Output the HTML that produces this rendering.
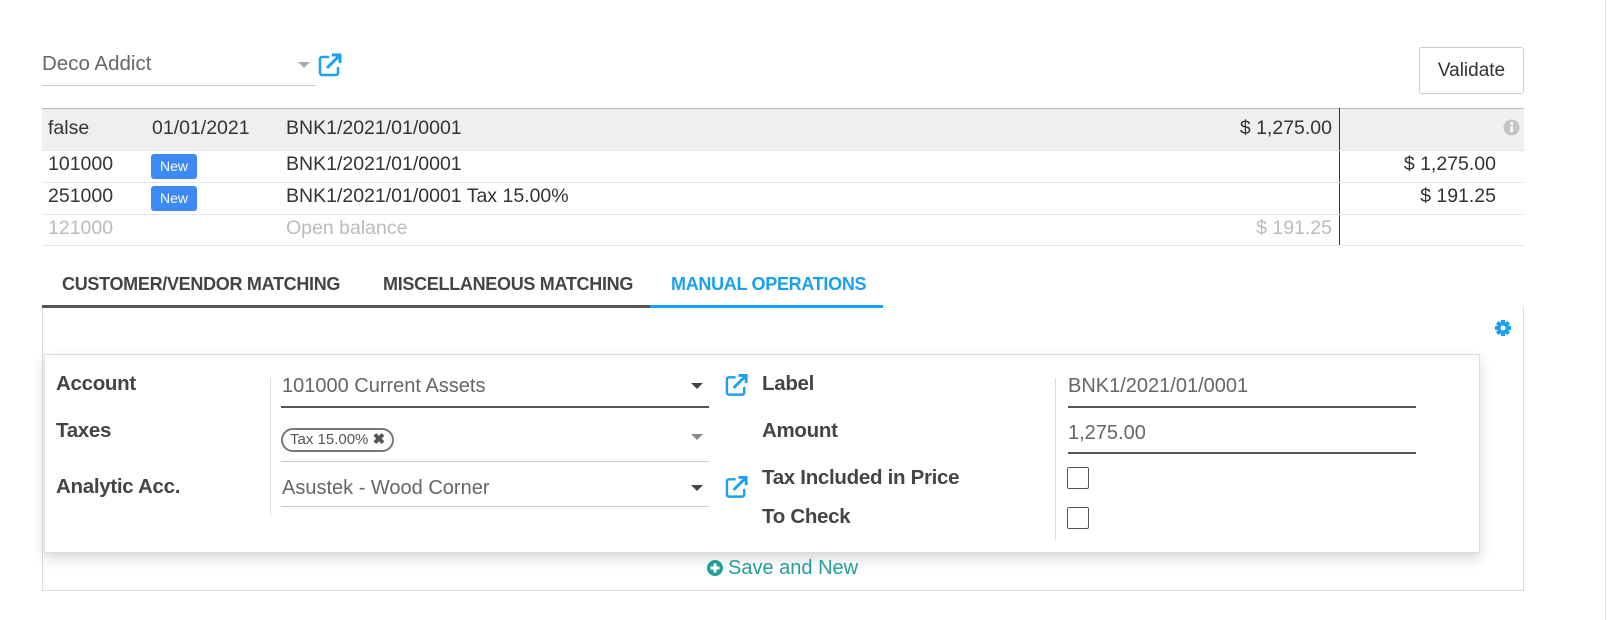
<!DOCTYPE html>
<html><head><meta charset="utf-8"><style>
*{margin:0;padding:0;box-sizing:border-box}
body{width:1609px;height:620px;background:#fff;font-family:"Liberation Sans",sans-serif;color:#4c4c4c;position:relative;overflow:hidden;font-size:17px}
.a{position:absolute;white-space:nowrap}
.t{font-size:19.5px;line-height:24px;color:#333}
.lbl{font-size:20.5px;line-height:24px;font-weight:bold;color:#444;letter-spacing:-0.3px}
.inp{font-size:20px;line-height:24px;color:#666}
.hl{position:absolute;height:1px;background:#e6e6e6}
.badge{position:absolute;background:#3d8af7;color:#fff;font-size:14px;border-radius:3px;width:46px;height:25px;line-height:25px;text-align:center}
.chk{position:absolute;width:22px;height:22px;border:1px solid #555;border-radius:2px;background:#fff}
.caret{position:absolute;width:0;height:0;border-left:6px solid transparent;border-right:6px solid transparent;border-top:6px solid #444}
.tab{font-size:18px;font-weight:bold;color:#444;letter-spacing:-0.3px;line-height:22px}
</style></head><body>
<div class="a" style="right:3px;top:0;width:1px;height:620px;background:#e0e0e0"></div>

<!-- partner -->
<div class="a" style="left:42px;top:52px;font-size:20.5px;line-height:24px;color:#666">Deco Addict</div>
<div class="caret" style="left:298px;top:62px;border-top-color:#aaa"></div>
<div class="a" style="left:42px;top:85px;width:274px;height:1px;background:#ccc"></div>
<svg class="a" style="left:318px;top:53px" width="26" height="24" viewBox="0 0 26 24"><path d="M11 4H4a2 2 0 0 0-2 2v14a2 2 0 0 0 2 2h14a2 2 0 0 0 2-2v-6" fill="none" stroke="#1aa0f0" stroke-width="2.5"/><path d="M9 15L22 2M14 2h8v8" fill="none" stroke="#1aa0f0" stroke-width="3"/></svg>

<div class="a" style="left:1419px;top:47px;width:105px;height:47px;border:1px solid #ccc;border-radius:3px;text-align:center;line-height:45px;font-size:19px;color:#333">Validate</div>

<!-- table -->
<div class="a" style="left:42px;top:108px;width:1482px;height:42px;background:#efefef;border-top:1px solid #bbb"></div>
<div class="a" style="left:1339px;top:108px;width:1px;height:137px;background:#333"></div>
<div class="hl" style="left:42px;top:150px;width:1482px"></div>
<div class="hl" style="left:42px;top:182px;width:1482px"></div>
<div class="hl" style="left:42px;top:214px;width:1482px"></div>
<div class="hl" style="left:42px;top:245px;width:1482px"></div>
<div class="a t" style="left:48px;top:116px">false</div>
<div class="a t" style="left:152px;top:116px">01/01/2021</div>
<div class="a t" style="left:286px;top:116px">BNK1/2021/01/0001</div>
<div class="a t" style="right:277px;top:116px">$ 1,275.00</div>
<svg class="a" style="left:1503px;top:119px" width="17" height="17" viewBox="0 0 17 17"><circle cx="8.5" cy="8.5" r="8" fill="#c4c4c4"/><rect x="7.3" y="7" width="2.6" height="6" fill="#fff"/><circle cx="8.6" cy="4.5" r="1.5" fill="#fff"/></svg>

<div class="a t" style="left:48px;top:152px">101000</div>
<div class="badge" style="left:151px;top:154px">New</div>
<div class="a t" style="left:286px;top:152px">BNK1/2021/01/0001</div>
<div class="a t" style="right:113px;top:152px">$ 1,275.00</div>

<div class="a t" style="left:48px;top:184px">251000</div>
<div class="badge" style="left:151px;top:186px">New</div>
<div class="a t" style="left:286px;top:184px">BNK1/2021/01/0001 Tax 15.00%</div>
<div class="a t" style="right:113px;top:184px">$ 191.25</div>

<div class="a t" style="left:48px;top:216px;color:#bbb">121000</div>
<div class="a t" style="left:286px;top:216px;color:#bbb">Open balance</div>
<div class="a t" style="right:277px;top:216px;color:#bbb">$ 191.25</div>

<!-- tabs -->
<div class="a tab" style="left:62px;top:273px">CUSTOMER/VENDOR MATCHING</div>
<div class="a tab" style="left:383px;top:273px">MISCELLANEOUS MATCHING</div>
<div class="a tab" style="left:671px;top:273px;color:#1aa0f0">MANUAL OPERATIONS</div>
<div class="a" style="left:42px;top:307px;width:1482px;height:284px;border:1px solid #ddd;border-top:none"></div>
<div class="a" style="left:42px;top:305px;width:608px;height:3px;background:#555"></div>
<div class="a" style="left:650px;top:305px;width:233px;height:3px;background:#1aa0f0"></div>
<svg class="a" style="left:1494px;top:319px" width="18" height="18" viewBox="0 0 18 18"><g fill="#1aa0f0"><circle cx="9" cy="9" r="6"/><rect x="7" y="1" width="4" height="16"/><rect x="1" y="7" width="16" height="4"/><rect x="7" y="1" width="4" height="16" transform="rotate(45 9 9)"/><rect x="7" y="1" width="4" height="16" transform="rotate(-45 9 9)"/></g><circle cx="9" cy="9" r="2.5" fill="#fff"/></svg>

<!-- inner card -->
<div class="a" style="left:44px;top:354px;width:1436px;height:199px;background:#fff;border:1px solid #ddd;box-shadow:0 6px 12px rgba(0,0,0,0.15)"></div>
<div class="a" style="left:270px;top:378px;width:1px;height:137px;background:#ddd"></div>
<div class="a" style="left:1055px;top:378px;width:1px;height:162px;background:#ddd"></div>

<div class="a lbl" style="left:56px;top:372px">Account</div>
<div class="a lbl" style="left:56px;top:419px">Taxes</div>
<div class="a lbl" style="left:56px;top:475px">Analytic Acc.</div>

<div class="a inp" style="left:282px;top:374px">101000 Current Assets</div>
<div class="caret" style="left:691px;top:383px"></div>
<div class="a" style="left:281px;top:406px;width:428px;height:2px;background:#555"></div>

<div class="a" style="left:281px;top:428px;height:24px;padding:0 7px;border:2px solid #777;border-radius:12px;font-size:15px;line-height:20px;color:#555">Tax 15.00% <b style="color:#555">✖</b></div>
<div class="caret" style="left:691px;top:434px;border-top-color:#888"></div>
<div class="a" style="left:281px;top:461px;width:428px;height:1px;background:#ccc"></div>

<div class="a inp" style="left:282px;top:476px">Asustek - Wood Corner</div>
<div class="caret" style="left:691px;top:485px"></div>
<div class="a" style="left:281px;top:506px;width:428px;height:1px;background:#ccc"></div>

<svg class="a" style="left:725px;top:373px" width="25" height="24" viewBox="0 0 26 24"><path d="M11 4H4a2 2 0 0 0-2 2v14a2 2 0 0 0 2 2h14a2 2 0 0 0 2-2v-6" fill="none" stroke="#1aa0f0" stroke-width="2.5"/><path d="M9 15L22 2M14 2h8v8" fill="none" stroke="#1aa0f0" stroke-width="3"/></svg>
<svg class="a" style="left:725px;top:475px" width="25" height="24" viewBox="0 0 26 24"><path d="M11 4H4a2 2 0 0 0-2 2v14a2 2 0 0 0 2 2h14a2 2 0 0 0 2-2v-6" fill="none" stroke="#1aa0f0" stroke-width="2.5"/><path d="M9 15L22 2M14 2h8v8" fill="none" stroke="#1aa0f0" stroke-width="3"/></svg>

<div class="a lbl" style="left:762px;top:372px">Label</div>
<div class="a lbl" style="left:762px;top:419px">Amount</div>
<div class="a lbl" style="left:762px;top:466px">Tax Included in Price</div>
<div class="a lbl" style="left:762px;top:505px">To Check</div>

<div class="a inp" style="left:1068px;top:374px">BNK1/2021/01/0001</div>
<div class="a" style="left:1068px;top:406px;width:348px;height:2px;background:#555"></div>
<div class="a inp" style="left:1068px;top:421px">1,275.00</div>
<div class="a" style="left:1068px;top:452px;width:348px;height:2px;background:#555"></div>
<div class="chk" style="left:1067px;top:467px"></div>
<div class="chk" style="left:1067px;top:507px"></div>

<svg class="a" style="left:707px;top:560px" width="16" height="16" viewBox="0 0 16 16"><circle cx="8" cy="8" r="8" fill="#229e98"/><rect x="3.5" y="6.5" width="9" height="3" fill="#fff"/><rect x="6.5" y="3.5" width="3" height="9" fill="#fff"/></svg>
<div class="a" style="left:728px;top:556px;font-size:20px;line-height:24px;color:#229e98">Save and New</div>
</body></html>
